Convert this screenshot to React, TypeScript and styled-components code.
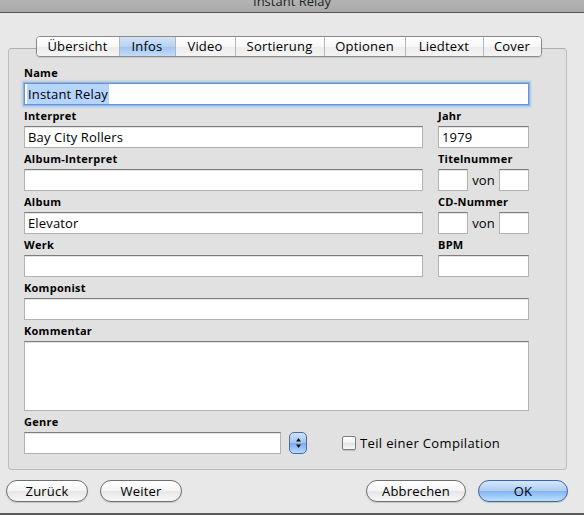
import React from 'react'
import styled, { createGlobalStyle, css } from 'styled-components'

const GlobalStyle = createGlobalStyle`
  html, body {
    margin: 0;
    padding: 0;
    background: #e8e8e8;
  }
  body {
    font-family: "Open Sans", "Noto Sans", "DejaVu Sans", sans-serif;
    color: #000;
  }
`

const Window = styled.div`
  width: 584px;
  height: 515px;
  box-sizing: border-box;
  display: flex;
  flex-direction: column;
  background: #e8e8e8;
  border-bottom: 2px solid #5c5c5c;
  overflow: hidden;
`

const TitleBar = styled.div`
  height: 12px;
  flex: none;
  overflow: hidden;
  background: linear-gradient(#b4b4b4, #a9a9a9);
  border-bottom: 1px solid #555;
  display: flex;
  justify-content: center;
`

const TitleText = styled.div`
  font-size: 13px;
  line-height: 13px;
  margin-top: -5px;
  color: #222;
`

const TabBox = styled.div`
  margin: 23px 0 0 8px;
  width: 559px;
  display: flex;
  flex-direction: column;
`

const Tabs = styled.div`
  position: relative;
  z-index: 1;
  align-self: center;
  margin: 0 0 -9px 2px;
  display: flex;
  height: 21px;
  box-sizing: border-box;
  border: 1px solid #8a8a8a;
  border-radius: 4px;
  overflow: hidden;
  box-shadow: 0 1px 1px rgba(0, 0, 0, 0.12);
`

const Tab = styled.div<{ $w: number; $active?: boolean }>`
  width: ${(p) => p.$w}px;
  box-sizing: border-box;
  display: flex;
  align-items: center;
  justify-content: center;
  font-size: 13px;
  line-height: 19px;
  letter-spacing: 0.2px;
  background: linear-gradient(#ffffff 0%, #f7f7f7 50%, #ececec 51%, #f4f4f4 100%);
  & + & {
    border-left: 1px solid #b7b7b7;
  }
  ${(p) =>
    p.$active &&
    css`
      background: linear-gradient(#d3e4f9 0%, #b7d2f3 50%, #9fc4f0 51%, #c4ddfa 100%);
    `}
`

const Panel = styled.div`
  box-sizing: border-box;
  height: 422px;
  border: 1px solid #bcbcbc;
  border-top-color: #aeaeae;
  border-radius: 4px;
  background: #e1e1e1;
  padding: 17px 0 0 15px;
  display: flex;
  flex-direction: column;
  gap: 4px;
`

const FormGrid = styled.div`
  display: grid;
  grid-template-columns: 399px 91px;
  column-gap: 15px;
  row-gap: 4px;
`

const Field = styled.div<{ $span?: boolean }>`
  display: flex;
  flex-direction: column;
  gap: 4px;
  ${(p) =>
    p.$span &&
    css`
      grid-column: 1 / span 2;
    `}
`

const Label = styled.div`
  font-size: 11px;
  font-weight: 700;
  line-height: 13px;
  letter-spacing: 0.25px;
  height: 13px;
  white-space: nowrap;
`

const TextBox = styled.div<{ $h?: number; $w?: number; $focused?: boolean }>`
  box-sizing: border-box;
  height: ${(p) => p.$h ?? 22}px;
  ${(p) => p.$w && `width: ${p.$w}px; flex: none;`}
  background: #fff;
  border: 1px solid #b2b2b2;
  border-top-color: #7d7d7d;
  box-shadow: inset 0 1px 0 #e4e4e4;
  padding: 0 3px;
  font-size: 13px;
  line-height: 20px;
  letter-spacing: 0.15px;
  white-space: nowrap;
  overflow: hidden;
  ${(p) =>
    p.$focused &&
    css`
      border-color: #6b95cf;
      box-shadow: 0 0 0 1px #8fb3e4, 0 0 2px 2px #a9c6ec;
      padding-left: 2px;
    `}
`

const Selected = styled.span`
  background: #b5d5ff;
  padding: 1px 1px;
`

const PairRow = styled.div`
  display: flex;
  align-items: center;
  justify-content: space-between;
`

const Von = styled.span`
  font-size: 13px;
  line-height: 20px;
`

const GenreRow = styled.div`
  display: flex;
  align-items: flex-end;
`

const GenreField = styled(Field)`
  width: 257px;
`

const Stepper = styled.div`
  width: 18px;
  height: 22px;
  box-sizing: border-box;
  margin-left: 8px;
  border: 1px solid #4d6d9c;
  border-radius: 5px;
  background: linear-gradient(#cfe2fb 0%, #9ec5f2 50%, #76aaeb 51%, #b9dafc 100%);
  display: flex;
  align-items: center;
  justify-content: center;
`

const CheckWrap = styled.label`
  display: flex;
  align-items: center;
  gap: 4px;
  margin-left: 35px;
  height: 22px;
  font-size: 13px;
  line-height: 20px;
  letter-spacing: 0.35px;
`

const CheckBox = styled.span`
  width: 14px;
  height: 14px;
  box-sizing: border-box;
  border: 1px solid #7c7c7c;
  border-radius: 2px;
  background: linear-gradient(#ffffff, #f0f0f0 50%, #e2e2e2 51%, #f7f7f7);
  box-shadow: 0 1px 1px rgba(0, 0, 0, 0.15);
`

const ButtonBar = styled.div`
  display: flex;
  align-items: center;
  padding: 10px 16px 0 6px;
  gap: 12px;
`

const Spacer = styled.div`
  flex: 1;
`

const Button = styled.div<{ $w: number; $primary?: boolean }>`
  width: ${(p) => p.$w}px;
  height: 22px;
  box-sizing: border-box;
  border: 1px solid #6e6e6e;
  border-radius: 11px;
  display: flex;
  align-items: center;
  justify-content: center;
  font-size: 13px;
  line-height: 20px;
  letter-spacing: 0.2px;
  background: linear-gradient(#ffffff 0%, #f4f4f4 50%, #e6e6e6 51%, #f8f8f8 100%);
  box-shadow: 0 1px 1px rgba(0, 0, 0, 0.15);
  ${(p) =>
    p.$primary &&
    css`
      border-color: #3f64a3;
      background: linear-gradient(#d7e8fc 0%, #a9cbf5 50%, #82b3ef 51%, #c2e0fe 100%);
    `}
`

const tabs = [
  { label: 'Übersicht', w: 82 },
  { label: 'Infos', w: 56, active: true },
  { label: 'Video', w: 60 },
  { label: 'Sortierung', w: 89 },
  { label: 'Optionen', w: 81 },
  { label: 'Liedtext', w: 78 },
  { label: 'Cover', w: 58 },
]

const StepperIcon = () => (
  <svg width="7" height="12" viewBox="0 0 7 12">
    <path d="M3.5 1 L6 4.5 H1 Z" fill="#111" />
    <path d="M3.5 11 L6 7.5 H1 Z" fill="#111" />
  </svg>
)

const NumberPair = () => (
  <PairRow>
    <TextBox $w={30} />
    <Von>von</Von>
    <TextBox $w={30} />
  </PairRow>
)

export default function App() {
  return (
    <>
      <GlobalStyle />
      <Window>
        <TitleBar>
          <TitleText>Instant Relay</TitleText>
        </TitleBar>
        <TabBox>
          <Tabs>
            {tabs.map((t) => (
              <Tab key={t.label} $w={t.w} $active={t.active}>
                {t.label}
              </Tab>
            ))}
          </Tabs>
          <Panel>
            <FormGrid>
              <Field $span>
                <Label>Name</Label>
                <TextBox $focused>
                  <Selected>Instant Relay</Selected>
                </TextBox>
              </Field>
              <Field>
                <Label>Interpret</Label>
                <TextBox>Bay City Rollers</TextBox>
              </Field>
              <Field>
                <Label>Jahr</Label>
                <TextBox>1979</TextBox>
              </Field>
              <Field>
                <Label>Album-Interpret</Label>
                <TextBox />
              </Field>
              <Field>
                <Label>Titelnummer</Label>
                <NumberPair />
              </Field>
              <Field>
                <Label>Album</Label>
                <TextBox>Elevator</TextBox>
              </Field>
              <Field>
                <Label>CD-Nummer</Label>
                <NumberPair />
              </Field>
              <Field>
                <Label>Werk</Label>
                <TextBox />
              </Field>
              <Field>
                <Label>BPM</Label>
                <TextBox />
              </Field>
              <Field $span>
                <Label>Komponist</Label>
                <TextBox />
              </Field>
              <Field $span>
                <Label>Kommentar</Label>
                <TextBox $h={70} />
              </Field>
            </FormGrid>
            <GenreRow>
              <GenreField>
                <Label>Genre</Label>
                <TextBox />
              </GenreField>
              <Stepper>
                <StepperIcon />
              </Stepper>
              <CheckWrap>
                <CheckBox />
                Teil einer Compilation
              </CheckWrap>
            </GenreRow>
          </Panel>
        </TabBox>
        <ButtonBar>
          <Button $w={82}>Zurück</Button>
          <Button $w={82}>Weiter</Button>
          <Spacer />
          <Button $w={100}>Abbrechen</Button>
          <Button $w={90} $primary>
            OK
          </Button>
        </ButtonBar>
      </Window>
    </>
  )
}
